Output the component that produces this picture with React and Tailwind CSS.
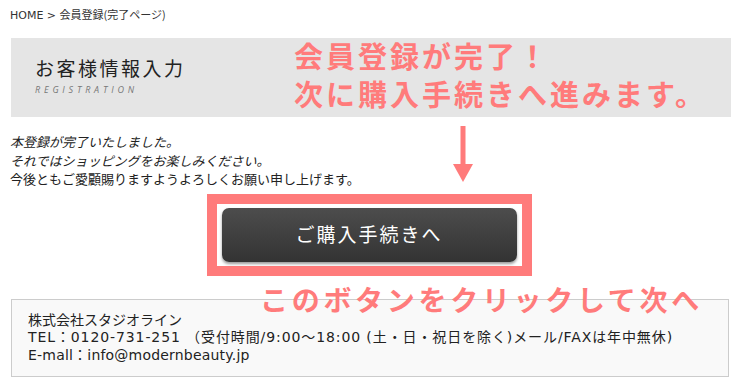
import React from "react";

const jp = { fontFamily: '"Noto Sans CJK JP", "Noto Sans", sans-serif' };
const wide = { fontFamily: '"DejaVu Sans", "Noto Sans CJK JP", sans-serif' };

const Arrow = () => (
  <svg width="20" height="58" viewBox="0 0 20 58" className="absolute left-[453px] top-[126px]">
    <rect x="7.5" y="0" width="5" height="40" fill="#ff7b7b" />
    <polygon points="0,38 20,38 10,56" fill="#ff7b7b" />
  </svg>
);

const App = () => {
  return (
    <div className="relative w-[738px] h-[387px] bg-white text-[#333] overflow-hidden" style={jp}>
      <div className="h-[16px] mt-[6px] pl-[10px] text-[11px] leading-[16px] text-[#333]" style={wide}>
        HOME &gt; <span style={jp}>会員登録(完了ページ)</span>
      </div>

      <div className="mx-[11px] mt-[16px] mr-[7px] h-[79px] bg-[#e5e5e5] pl-[24px] pt-[17px]">
        <div className="text-[19px] leading-[26px] tracking-[2.5px] text-[#222]">お客様情報入力</div>
        <div className="mt-[3px] text-[9px] leading-[12px] italic tracking-[3.8px] text-[#777]" style={{ fontFamily: '"Open Sans", sans-serif' }}>
          REGISTRATION
        </div>
      </div>

      <div className="pl-[10px] mt-[16px] text-[13px] leading-[18.5px] text-[#222]">
        <p className="italic">本登録が完了いたしました。</p>
        <p className="italic">それではショッピングをお楽しみください。</p>
        <p>今後ともご愛顧賜りますようよろしくお願い申し上げます。</p>
      </div>

      <div className="flex justify-center mt-[5px]">
        <div className="w-[325px] h-[82px] border-[10px] border-[#ff7b7b] bg-white flex items-center justify-center">
          <button className="w-[295px] h-[54px] rounded-[7px] bg-gradient-to-b from-[#4d4d4d] to-[#333333] shadow-[0_2px_3px_rgba(0,0,0,0.4)] text-white text-[19px] tracking-[2px]">
            ご購入手続きへ
          </button>
        </div>
      </div>

      <div className="ml-[11px] mr-[9px] mt-[23px] h-[78px] border border-[#cccccc] bg-[#f9f9f9] pl-[16px] pt-[12px] text-[14px] leading-[17.5px] text-[#222]" style={wide}>
        <p className="h-[17.5px]">株式会社スタジオライン</p>
        <p className="h-[17.5px] tracking-[0.9px]">TEL：0120-731-251 （受付時間/9:00〜18:00 (土・日・祝日を除く)メール/FAXは年中無休)</p>
        <p className="h-[17.5px] tracking-[0.2px]">E-mall：info@modernbeauty.jp</p>
      </div>

      <div className="absolute left-[294px] top-[36px] text-[29px] leading-[38px] font-bold tracking-[3px] text-[#ff7b7b]">
        <p>会員登録が完了！</p>
        <p>次に購入手続きへ進みます。</p>
      </div>

      <Arrow />

      <div className="absolute left-[260px] top-[281px] text-[28px] leading-[36px] font-bold tracking-[3.7px] text-[#ff7b7b]">
        このボタンをクリックして次へ
      </div>
    </div>
  );
};

export default App;
